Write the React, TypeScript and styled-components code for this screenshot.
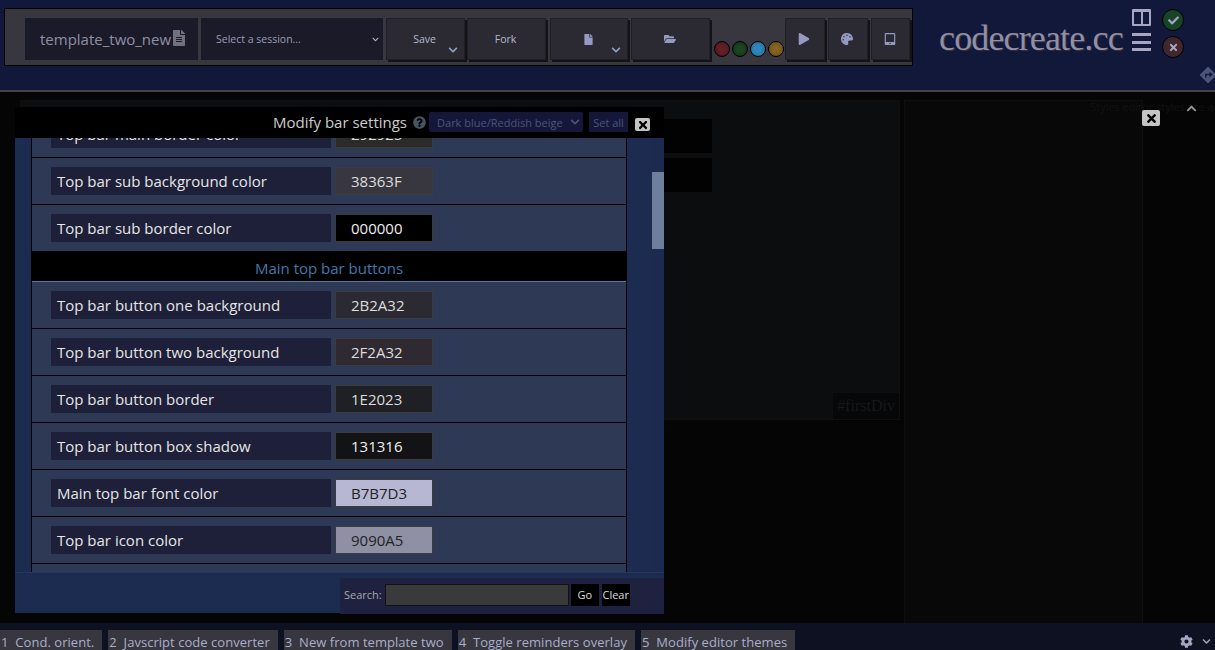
import React from "react";
import styled, { createGlobalStyle } from "styled-components";
import {
  FaFile, FaFolderOpen, FaPlay, FaPalette, FaTabletAlt, FaChevronDown, FaChevronUp, FaCog,
  FaTimes, FaCheck, FaQuestionCircle, FaFileAlt, FaDirections,
} from "react-icons/fa";

const Global = createGlobalStyle`
  html, body { margin: 0; padding: 0; background: #000; }
  * { box-sizing: border-box; }
  body { font-family: "Open Sans", "Liberation Sans", sans-serif; }
`;

const Page = styled.div`
  width: 1215px; height: 650px; display: flex; flex-direction: column; overflow: hidden; background: #050505;
`;
const Header = styled.header`
  height: 92px; flex: none; background: #12183a; border-bottom: 2px solid #444; padding: 8px 0 0 4px;
  display: flex; align-items: flex-start; position: relative;
`;
const TopBar = styled.div`
  width: 909px; height: 58px; background: #38363f; border: 1px solid #000; padding: 9px 0 0 20px;
  display: flex; align-items: flex-start;
`;
const TitleBox = styled.div`
  width: 173px; height: 42px; background: #1b1a29; color: #8f90a5; font-size: 15px;
  display: flex; align-items: center; padding-left: 15px; margin-right: 3px;
  svg { color: #71717f; font-size: 16px; flex: none; margin-top: -2px; }
`;
const SessionBox = styled.div`
  width: 182px; height: 42px; background: #1b1a29; color: #9a9bb5; font-size: 10.5px;
  display: flex; align-items: center; justify-content: space-between; padding: 0 4px 0 15px; margin-right: 3px;
  svg { font-size: 7px; color: #b7b7d3; margin-right: 0; }
`;
const BarButton = styled.button<{ $w: number; $gap: number }>`
  position: relative; width: ${(p) => p.$w}px; height: 42px; margin-right: ${(p) => p.$gap}px; flex: none; padding: 0 2px 0 0;
  background: #2b2a32; border: 1px solid #1e2023; box-shadow: 2px 2px 0 #131316; color: #b7b7d3;
  font: 10.5px "Open Sans", sans-serif; display: flex; align-items: center; justify-content: center;
  svg { color: #949ac4; }
`;
const Caret = styled.span`
  position: absolute; right: 6px; bottom: 4px; display: flex;
  svg { font-size: 10px; color: #8fa0c8; }
`;
const Dots = styled.div`
  display: flex; gap: 2px; width: 72px; height: 42px; align-items: flex-end; padding: 0 0 3px 1px; flex: none;
`;
const Dot = styled.span<{ $c: string; $e: string }>`
  width: 16px; height: 16px; border-radius: 50%; border: 1px solid #000;
  background: radial-gradient(circle at 50% 50%, ${(p) => p.$c} 30%, ${(p) => p.$e});
`;
const Logo = styled.div`
  margin: 10px 0 0 26px; width: 188px; color: #8f90a8; font: 36px/40px "Liberation Serif", serif;
  letter-spacing: -0.85px; text-shadow: 1px 1px 0 #3b2f33; white-space: nowrap;
`;
const Tools = styled.div`
  margin: 1px 0 0 5px; width: 24px; display: flex; flex-direction: column; gap: 7px; align-items: flex-start;
`;
const Columns = styled.div`
  width: 19px; height: 17px; border: 3px solid #a6a6c2; border-width: 3px 2px 2px; border-radius: 1px; display: flex; gap: 2px; background: #a6a6c2;
  span { flex: 1; background: #12183a; }
`;
const Burger = styled.div`
  width: 19px; height: 18px; display: flex; flex-direction: column; justify-content: space-between;
  span { height: 3px; background: #a6a6c2; }
`;
const Status = styled.div`
  margin: 1px 0 0 6px; display: flex; flex-direction: column; gap: 5px;
`;
const StatusDot = styled.div<{ $bg: string }>`
  width: 22px; height: 22px; border-radius: 50%; border: 1px solid #000; background: ${(p) => p.$bg};
  display: flex; align-items: center; justify-content: center;
  svg { font-size: 11px; color: #a6a6c2; }
`;
const Diamond = styled.div`
  position: absolute; right: -1px; top: 67px; color: #4c5478; display: flex; font-size: 16px;
`;
const Workspace = styled.main`
  position: relative; flex: 1; min-height: 0; background: #050505; padding: 8px 0 0 20px; display: flex;
`;
const LeftPane = styled.div`
  width: 880px; height: 320px; background: #0b0d0f; border: 1px solid #0f0f0f; display: flex; flex-direction: column;
  align-items: flex-end;
`;
const DarkBlocks = styled.div`
  margin: 18px 187px 0 0; display: flex; flex-direction: column; gap: 5px;
  span { width: 60px; height: 34px; background: #020203; }
`;
const DivTag = styled.div`
  margin-top: auto; width: 66px; height: 26px; background: #060708; color: #181818;
  font: 16px/26px "Liberation Serif", serif; text-align: center;
`;
const RightPane = styled.div`
  margin-left: 4px; width: 239px; background: #080808; border: 1px solid #0f0f0f; border-bottom: 0;
`;
const StyleNote = styled.div`
  position: absolute; left: 1090px; top: 7px; color: #121212; font-size: 11px; white-space: nowrap;
`;
const CollapseIcon = styled.div`
  position: absolute; left: 1186px; top: 11px; color: #999; font-size: 11px; display: flex;
`;
const CloseButton = styled.button<{ $w: number; $h: number; $s: number }>`
  width: ${(p) => p.$w}px; height: ${(p) => p.$h}px; flex: none; padding: 0; border: 0; border-radius: 2px; background: #c4c4c4;
  color: #000; display: flex; align-items: center; justify-content: center; font-size: ${(p) => p.$s}px;
`;
const PaneClose = styled.div`
  position: absolute; left: 1142px; top: 18px;
`;
const Modal = styled.section`
  position: absolute; left: 15px; top: 15px; width: 649px; height: 506px; display: flex; flex-direction: column;
  background: #1c2b50;
`;
const ModalHead = styled.div`
  height: 31px; flex: none; background: #000; display: flex; align-items: center; padding: 0 0 1px 258px; color: #ccc; font-size: 15px;
  z-index: 1;
`;
const Help = styled.span`
  display: flex; margin: 0 3px 0 6px; font-size: 13px; color: #46555f;
`;
const ThemeSelect = styled.div`
  width: 154px; height: 20px; background: #14163a; color: #4b5679; font-size: 11px; border-radius: 2px;
  display: flex; align-items: center; justify-content: space-between; padding: 0 3px 0 8px;
  svg { font-size: 10px; }
`;
const SetAll = styled.div`
  margin-left: 6px; width: 39px; height: 20px; background: #14163a; color: #4b5679; font-size: 11px; line-height: 22px; text-align: center;
`;
const HeadClose = styled.div`
  margin: 5px 0 0 7px;
`;
const ModalBody = styled.div`
  flex: 1; min-height: 0; display: flex; padding-left: 16px;
`;
const List = styled.div`
  width: 597px; overflow: hidden; border: 1px solid #000; border-width: 0 1px; background: #2e3a55;
`;
const Rows = styled.div`
  margin-top: -27px;
`;
const Row = styled.div`
  height: 47px; border-bottom: 1px solid #000; padding: 9px 0 0 19px; display: flex; gap: 4px;
`;
const Label = styled.div`
  width: 280px; height: 28px; background: #1e1f38; color: #e6e6e6; font-size: 15px; line-height: 28px; padding-left: 6px;
`;
const Value = styled.div<{ $bg: string; $fg: string }>`
  width: 98px; height: 28px; background: ${(p) => p.$bg}; color: ${(p) => p.$fg}; border: 1px solid #3c3c3c; font-size: 15px;
  line-height: 26px; padding-left: 15px;
`;
const SectionHead = styled.div`
  height: 31px; margin-top: -1px; background: #000; border-bottom: 1px solid #4f7ca8; color: #4079ae; font-size: 15px; line-height: 35px;
  text-align: center;
`;
const Track = styled.div`
  margin-left: 25px; width: 12px; border-radius: 6px 0 0 6px; background: #1d2a4f; padding-top: 34px; flex: none;
`;
const Thumb = styled.div`
  height: 77px; background: #6e7f9e;
`;
const ModalFoot = styled.div`
  height: 41px; flex: none; border-top: 1px solid #26365c; background: #1c2b50; padding: 5px 0 0 325px;
`;
const SearchBar = styled.div`
  height: 36px; background: #1e2140; display: flex; align-items: center; padding: 0 0 3px 4px; color: #a8a8a8; font-size: 11px;
`;
const SearchInput = styled.div`
  width: 184px; height: 22px; margin-left: 3px; background: #3a3a3a; border: 1px solid #111;
`;
const SearchBtn = styled.div<{ $w: number; $m: number }>`
  width: ${(p) => p.$w}px; height: 22px; margin-left: ${(p) => p.$m}px; background: #000; color: #ddd; text-align: center; line-height: 22px; font-size: 11px;
`;
const TabBar = styled.footer`
  height: 27px; flex: none; background: #0e1122; padding-top: 7px; display: flex; gap: 6px; position: relative;
`;
const Tab = styled.div`
  height: 20px; background: #38363f; color: #a9aecb; font-size: 13px; letter-spacing: 0.04px; line-height: 25px; padding: 0 8px 0 1px; white-space: pre; overflow: hidden;
`;
const TabTools = styled.div`
  position: absolute; right: 4px; top: 12px; display: flex; gap: 9px; align-items: center; color: #a6a6c2; font-size: 13px;
`;

const rows1: [string, string, string, string][] = [
  ["Top bar main border color", "292925", "#2b2b29", "#ddd"],
  ["Top bar sub background color", "38363F", "#38363f", "#ddd"],
  ["Top bar sub border color", "000000", "#000000", "#eee"],
];
const rows2: [string, string, string, string][] = [
  ["Top bar button one background", "2B2A32", "#2b2a32", "#ddd"],
  ["Top bar button two background", "2F2A32", "#2f2a32", "#ddd"],
  ["Top bar button border", "1E2023", "#1e2023", "#ddd"],
  ["Top bar button box shadow", "131316", "#131316", "#eee"],
  ["Main top bar font color", "B7B7D3", "#b7b7d3", "#222"],
  ["Top bar icon color", "9090A5", "#9090a5", "#222"],
  ["", "", "#2e3a55", "#222"],
];
const tabs = ["1  Cond. orient.", "2  Javscript code converter", "3  New from template two", "4  Toggle reminders overlay", "5  Modify editor themes"];

const renderRow = ([l, v, bg, fg]: [string, string, string, string]) => (
  <Row key={l || "empty"}>
    <Label>{l}</Label>
    <Value $bg={bg} $fg={fg}>{v}</Value>
  </Row>
);

export default function App() {
  return (
    <Page>
      <Global />
      <Header>
        <TopBar>
          <TitleBox>template_two_new<FaFileAlt /></TitleBox>
          <SessionBox>Select a session...<FaChevronDown /></SessionBox>
          <BarButton $w={79} $gap={2}>Save<Caret><FaChevronDown /></Caret></BarButton>
          <BarButton $w={79} $gap={4}>Fork</BarButton>
          <BarButton $w={78} $gap={3}><FaFile size={11} /><Caret><FaChevronDown /></Caret></BarButton>
          <BarButton $w={79} $gap={3}><FaFolderOpen size={12} /></BarButton>
          <Dots>
            <Dot $c="#632024" $e="#42171b" />
            <Dot $c="#1c4620" $e="#102d14" />
            <Dot $c="#2f86bd" $e="#226a98" />
            <Dot $c="#866320" $e="#664a16" />
          </Dots>
          <BarButton $w={40} $gap={3}><FaPlay size={12} /></BarButton>
          <BarButton $w={40} $gap={3}><FaPalette size={12} /></BarButton>
          <BarButton $w={39} $gap={0}><FaTabletAlt size={12} /></BarButton>
        </TopBar>
        <Logo>codecreate.cc</Logo>
        <Tools>
          <Columns><span /><span /></Columns>
          <Burger><span /><span /><span /></Burger>
        </Tools>
        <Status>
          <StatusDot $bg="#174426"><FaCheck /></StatusDot>
          <StatusDot $bg="#40262d"><FaTimes /></StatusDot>
        </Status>
        <Diamond><FaDirections /></Diamond>
      </Header>
      <Workspace>
        <LeftPane>
          <DarkBlocks><span /><span /></DarkBlocks>
          <DivTag>#firstDiv</DivTag>
        </LeftPane>
        <RightPane />
        <StyleNote>Styles editor styles are active.</StyleNote>
        <CollapseIcon><FaChevronUp /></CollapseIcon>
        <PaneClose><CloseButton $w={18} $h={16} $s={13}><FaTimes /></CloseButton></PaneClose>
        <Modal>
          <ModalHead>
            Modify bar settings
            <Help><FaQuestionCircle /></Help>
            <ThemeSelect>Dark blue/Reddish beige<FaChevronDown /></ThemeSelect>
            <SetAll>Set all</SetAll>
            <HeadClose><CloseButton $w={15} $h={13} $s={12}><FaTimes /></CloseButton></HeadClose>
          </ModalHead>
          <ModalBody>
            <List>
              <Rows>
                {rows1.map(renderRow)}
                <SectionHead>Main top bar buttons</SectionHead>
                {rows2.map(renderRow)}
              </Rows>
            </List>
            <Track><Thumb /></Track>
          </ModalBody>
          <ModalFoot>
            <SearchBar>
              Search:
              <SearchInput />
              <SearchBtn $w={28} $m={2}>Go</SearchBtn>
              <SearchBtn $w={28} $m={3}>Clear</SearchBtn>
            </SearchBar>
          </ModalFoot>
        </Modal>
      </Workspace>
      <TabBar>
        {tabs.map((t) => <Tab key={t}>{t}</Tab>)}
        <TabTools><FaCog /><FaChevronDown size={9} /></TabTools>
      </TabBar>
    </Page>
  );
}
